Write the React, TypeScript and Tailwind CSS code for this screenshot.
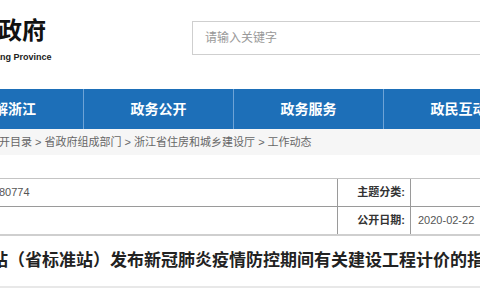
import React from "react";

const font = { fontFamily: '"Liberation Sans", "Noto Sans CJK SC", sans-serif' };

const navItems = ["了解浙江", "政务公开", "政务服务", "政民互动"];

const App: React.FC = () => {
  return (
    <div
      className="w-[480px] h-[300px] overflow-hidden bg-white text-[#333]"
      style={font}
    >
      {/* header */}
      <div className="h-[89px] flex">
        <div className="w-[192px] shrink-0 overflow-hidden pt-[16px]">
          <div className="-ml-[122px] whitespace-nowrap text-[24px] leading-[30px] font-bold text-[#111]">
            浙江省人民政府
          </div>
          <div className="-ml-[26px] mt-[5px] whitespace-nowrap text-[9px] leading-[12px] font-bold text-[#222]">
            Zhejiang Province
          </div>
        </div>
        <div className="mt-[21px] h-[34px] flex-1 border border-r-0 border-[#cfcfcf] flex items-center pl-[12px] text-[12px] text-[#999]">
          请输入关键字
        </div>
      </div>

      {/* nav */}
      <div className="h-[40px] bg-[#1d6fb8] overflow-hidden">
        <div className="flex h-full -ml-[67px]">
          {navItems.map((item, i) => (
            <div
              key={item}
              className={
                "w-[150px] shrink-0 flex items-center justify-center text-[14px] font-bold text-white " +
                (i > 0 ? "border-l border-[#6ea3d6]" : "")
              }
            >
              {item}
            </div>
          ))}
        </div>
      </div>

      {/* breadcrumb */}
      <div className="h-[26px] bg-[#f6f6f6] overflow-hidden flex items-center">
        <div className="-ml-[34px] whitespace-nowrap text-[11px] text-[#666]">
          政务公开目录 &gt; 省政府组成部门 &gt; 浙江省住房和城乡建设厅 &gt; 工作动态
        </div>
      </div>

      {/* info table */}
      <div className="mt-[23px] border-t border-[#c4c4c4]">
        <div className="flex h-[28px] border-b border-[#9a9a9a]">
          <div className="w-[338px] shrink-0 overflow-hidden flex items-center border-r border-[#9a9a9a]">
            <span className="-ml-[1px] text-[11px] text-[#555]">80774</span>
          </div>
          <div className="w-[73px] shrink-0 flex items-center justify-end pr-[5px] border-r border-[#9a9a9a] text-[11px] font-bold text-[#333]">
            主题分类:
          </div>
          <div className="flex-1" />
        </div>
        <div className="flex h-[29px] border-b-2 border-[#cfcfcf]">
          <div className="w-[338px] shrink-0 border-r border-[#9a9a9a]" />
          <div className="w-[73px] shrink-0 flex items-center justify-end pr-[5px] border-r border-[#9a9a9a] text-[11px] font-bold text-[#333]">
            公开日期:
          </div>
          <div className="flex-1 flex items-center pl-[7px] text-[11px] text-[#555]">
            2020-02-22
          </div>
        </div>
      </div>

      {/* title */}
      <div className="h-[52px] overflow-hidden flex items-center border-b-2 border-[#e8e8e8]">
        <div className="-ml-[9px] whitespace-nowrap text-[17px] font-bold text-[#222]">
          站（省标准站）发布新冠肺炎疫情防控期间有关建设工程计价的指导意见
        </div>
      </div>
    </div>
  );
};

export default App;
